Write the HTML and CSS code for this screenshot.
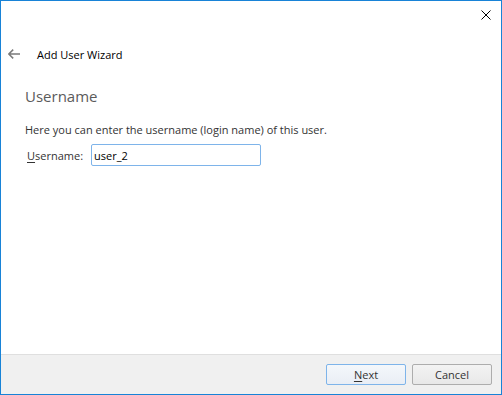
FILE: index.html
```html
<!DOCTYPE html>
<html lang="en">
<head>
    <meta charset="UTF-8">
    <meta name="viewport" content="width=device-width, initial-scale=1.0">
    <title>Add User Wizard</title>
    <link rel="stylesheet" href="styles.css">
</head>
<body>
    <div class="window">
        <div class="titlebar">
            <button type="button" class="close" aria-label="Close">
                <svg viewBox="0 0 10 10" width="10" height="10"><path d="M0.5 0.5L9.5 9.5M9.5 0.5L0.5 9.5" stroke="#000" stroke-width="1" fill="none"/></svg>
            </button>
        </div>
        <div class="wizard__header">
            <span class="back">
                <svg viewBox="0 0 12 10" width="12" height="10"><path d="M0.8 5H12M5.2 0.6L0.8 5l4.4 4.4" stroke="#7a7a7a" stroke-width="1.5" fill="none"/></svg>
            </span>
            <span class="wizard__title">Add User Wizard</span>
        </div>
        <div class="wizard__page">
            <h1 class="page__title">Username</h1>
            <p class="page__text">Here you can enter the username (login name) of this user.</p>
            <div class="field">
                <label class="field__label" for="username"><u>U</u>sername:</label>
                <input class="field__input" id="username" type="text" value="user_2">
            </div>
        </div>
        <div class="wizard__footer">
            <button type="button" class="btn btn_default"><u>N</u>ext</button>
            <button type="button" class="btn">Cancel</button>
        </div>
    </div>
</body>
</html>
```

FILE: styles.css
```css
body {
    margin: 0;
    font-family: "Open Sans", "Noto Sans", sans-serif;
    font-size: 11px;
    color: #000;
}
.window {
    width: 502px;
    height: 395px;
    box-sizing: border-box;
    border: 1px solid #1883d7;
    background-color: #fff;
    display: flex;
    flex-direction: column;
}
.titlebar {
    height: 31px;
    display: flex;
    justify-content: flex-end;
}
.close {
    width: 30px;
    height: 31px;
    border: none;
    background: none;
    padding: 0 0 4px;
    display: flex;
    align-items: center;
    justify-content: center;
}
.wizard__header {
    height: 44px;
    display: flex;
    align-items: center;
    padding-left: 7px;
}
.back {
    width: 29px;
    display: flex;
    align-items: center;
}
.wizard__page {
    flex: 1;
    padding: 10px 24px 0;
}
.page__title {
    margin: 0;
    font-size: 15px;
    font-weight: normal;
    color: #5b5b5b;
}
.page__text {
    margin: 16px 0 0;
    color: #333;
}
.field {
    display: flex;
    align-items: center;
    gap: 8px;
    margin-top: 7px;
    padding-left: 2px;
}
.field__label {
    color: #333;
}
.field__label u,
.btn u {
    text-decoration-thickness: 1px;
    text-underline-offset: 2px;
}
.field__input {
    width: 170px;
    height: 22px;
    box-sizing: border-box;
    border: 1px solid #7eb4ea;
    border-radius: 2px;
    padding: 0 2px;
    font: inherit;
    color: #000;
    outline: none;
}
.wizard__footer {
    height: 40px;
    border-top: 1px solid #dfdfdf;
    background-color: #f0f0f0;
    display: flex;
    justify-content: flex-end;
    align-items: flex-start;
    gap: 6px;
    padding: 9px 9px 0 0;
    box-sizing: border-box;
}
.btn {
    width: 80px;
    height: 21px;
    border: 1px solid #adadad;
    border-radius: 2px;
    background: linear-gradient(#f3f3f3, #e8e8e8);
    font: inherit;
    color: #333;
    padding: 0;
}
.btn_default {
    border-color: #7eb4ea;
    background: linear-gradient(#f4f7fb, #e9eef5);
}
```
